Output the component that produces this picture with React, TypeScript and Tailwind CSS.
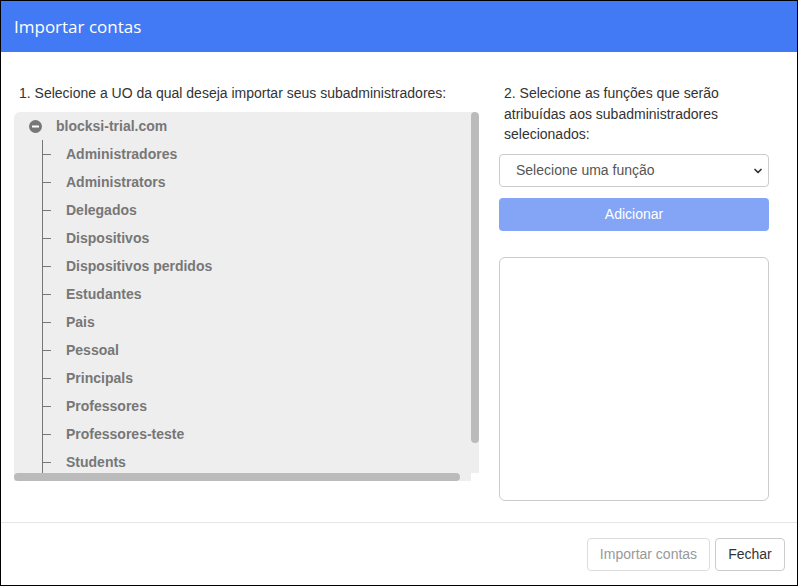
import { ChevronDown } from "lucide-react";

const units = [
  "Administradores",
  "Administrators",
  "Delegados",
  "Dispositivos",
  "Dispositivos perdidos",
  "Estudantes",
  "Pais",
  "Pessoal",
  "Principals",
  "Professores",
  "Professores-teste",
  "Students",
];

function MinusCircle() {
  return (
    <svg width="13" height="13" viewBox="0 0 13 13" className="shrink-0">
      <circle cx="6.5" cy="6.5" r="6.5" fill="#777777" />
      <rect x="3" y="5.5" width="7" height="2" fill="#ffffff" />
    </svg>
  );
}

// Scrollbars are drawn by hand so the picture doesn't depend on the browser's own.
function OrgTree() {
  return (
    <div className="flex w-[465px] flex-col overflow-hidden rounded-tl-[6px] rounded-tr-[4px]">
      <div className="flex h-[361px] bg-[#eeeeee]">
        <div className="w-[457px] overflow-hidden">
          <div className="w-[468px]">
            <div className="flex h-[28px] items-center pl-[15px]">
              <MinusCircle />
              <span className="ml-[14px] text-[14px] font-bold text-[#777777]">blocksi-trial.com</span>
            </div>
            <ul className="ml-[28px] border-l border-[#777777] pb-[30px]">
              {units.map((u) => (
                <li key={u} className="flex h-[28px] items-center">
                  <span className="h-px w-[8px] bg-[#777777]" />
                  <span className="ml-[15px] text-[14px] font-bold text-[#777777]">{u}</span>
                </li>
              ))}
            </ul>
          </div>
        </div>
        <div className="w-[8px]">
          <div className="h-[331px] rounded-[4px] bg-[#bbbbbb]" />
        </div>
      </div>
      <div className="flex h-[8px]">
        <div className="flex w-[457px] bg-[#eeeeee]">
          <div className="w-[446px] rounded-[4px] bg-[#bbbbbb]" />
        </div>
        <div className="w-[8px] bg-white" />
      </div>
    </div>
  );
}

export default function App() {
  return (
    <div
      className="flex h-[586px] w-[798px] flex-col border border-black bg-white text-[14px] text-[#333333]"
      style={{ fontFamily: '"Liberation Sans", Arial, sans-serif' }}
    >
      <div className="flex h-[51px] shrink-0 items-center bg-[#4279f4] pl-[13px]">
        <h1
          className="text-[17px] text-white"
          style={{ fontFamily: '"Open Sans", "Noto Sans", sans-serif' }}
        >
          Importar contas
        </h1>
      </div>

      <div className="flex flex-1 gap-[20px] pl-[13px] pt-[31px]">
        <div className="flex w-[465px] flex-col">
          <p className="mb-[9px] pl-[5px] leading-[20px] text-[#333333]">
            1. Selecione a UO da qual deseja importar seus subadministradores:
          </p>
          <OrgTree />
        </div>

        <div className="flex w-[270px] flex-col">
          <p className="mb-[9px] pl-[5px] leading-[20.5px] text-[#333333]">
            2. Selecione as funções que serão atribuídas aos subadministradores selecionados:
          </p>
          <div className="relative h-[33px]">
            <select className="h-full w-full appearance-none rounded-[4px] border border-[#cccccc] bg-white pl-[16px] text-[14px] text-[#555555] outline-none">
              <option>Selecione uma função</option>
            </select>
            <ChevronDown
              size={12}
              strokeWidth={3.5}
              className="pointer-events-none absolute right-[5px] top-[11px] text-[#333333]"
            />
          </div>
          <button
            disabled
            className="mt-[11px] h-[33px] w-full rounded-[4px] bg-[#84a5f5] text-[14px] text-white"
          >
            Adicionar
          </button>
          <div className="mt-[26px] h-[244px] w-full rounded-[6px] border border-[#cccccc] bg-white" />
        </div>
      </div>

      <div className="flex h-[63px] shrink-0 items-start justify-end gap-[5px] border-t border-[#e5e5e5] pr-[12px] pt-[15px]">
        <button
          disabled
          className="h-[33px] w-[123px] rounded-[4px] border border-[#dddddd] bg-white text-[14px] text-[#999999]"
        >
          Importar contas
        </button>
        <button className="h-[33px] w-[70px] rounded-[4px] border border-[#cccccc] bg-white text-[14px] text-[#333333]">
          Fechar
        </button>
      </div>
    </div>
  );
}
